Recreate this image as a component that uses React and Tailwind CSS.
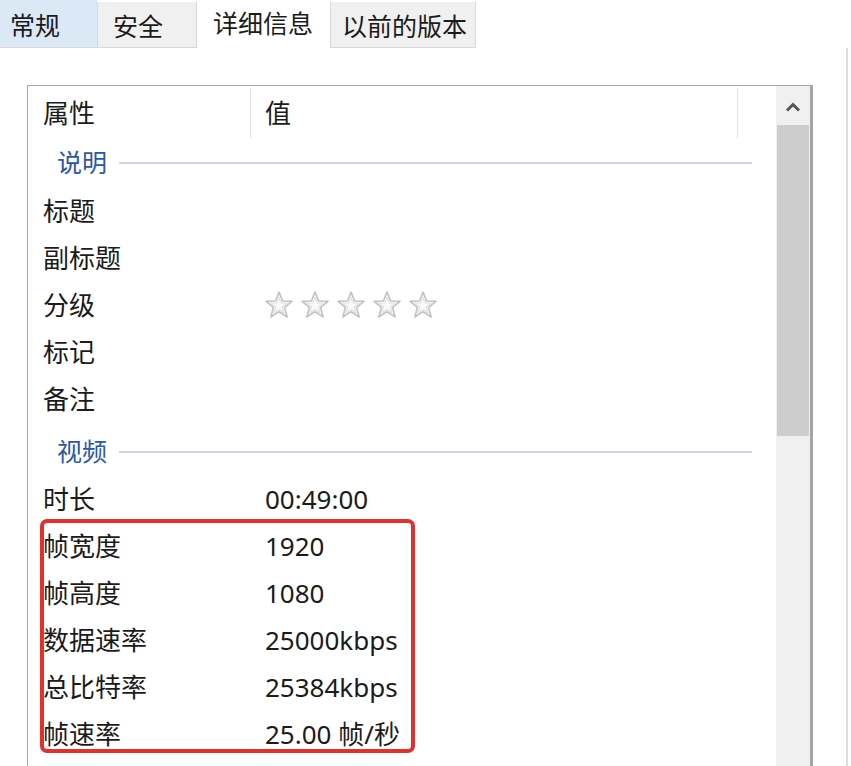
import React from "react";

const FONT = { fontFamily: '"Noto Sans", "Noto Sans CJK SC", sans-serif' };

// Hollow rating star, grey like the Windows property sheet
const Star = () => (
  <svg width="30" height="30" viewBox="0 0 30 30">
    <polygon
      points="15,2 18.6,11 28,11.4 20.6,17.4 23.2,27 15,21.6 6.8,27 9.4,17.4 2,11.4 11.4,11"
      fill="#fafafa"
      stroke="#c2c2c2"
      strokeWidth="1.6"
      strokeLinejoin="round"
    />
    <polygon
      points="15,7 17.2,13 23.2,13.3 18.4,17 20,23 15,19.6 10,23 11.6,17 6.8,13.3 12.8,13"
      fill="none"
      stroke="#e2e2e2"
      strokeWidth="1.2"
      strokeLinejoin="round"
    />
  </svg>
);

const GroupRow = ({ label, className }) => (
  <div className={`flex items-center pl-[29px] pr-[24px] ${className}`}>
    <span className="text-[#2a58a6] text-[25px] leading-none">{label}</span>
    <div className="flex-1 h-[2px] bg-[#cdd5e3] ml-[12px]" />
  </div>
);

const ItemRow = ({ name, children }) => (
  <div className="flex items-center h-[47px] text-[26px] leading-none text-[#1b1b1b]">
    <div className="w-[223px] pl-[15px]">{name}</div>
    <div className="pl-[14px] flex items-center">{children}</div>
  </div>
);

export default function App() {
  return (
    <div className="relative w-[851px] h-[766px] overflow-hidden bg-white" style={FONT}>
      {/* Tabs */}
      <div className="flex h-[48px] text-[25px] leading-none text-[#1b1b1b]">
        <div className="w-[97px] bg-[#dbe8f6] border-b border-[#d9d9d9] flex items-center pl-[10px] pt-[4px]">常规</div>
        <div className="w-[100px] bg-[#f0f0f0] border-l border-r border-b border-[#d9d9d9] mt-[2px] flex items-center pl-[15px] pt-[4px]">安全</div>
        <div className="w-[133px] bg-white flex items-center pl-[16px] pb-[4px] h-[50px]">详细信息</div>
        <div className="w-[146px] bg-[#f0f0f0] border-l border-r border-b border-[#d9d9d9] mt-[2px] flex items-center pl-[11px] pt-[4px]">以前的版本</div>
        <div className="flex-1" />
      </div>

      {/* Panel */}
      <div className="h-[718px] border-r-2 border-[#dcdcdc] w-[848px] pt-[37px] pl-[27px]">
        <div className="w-[786px] h-[700px] border-l border-t border-[#a8a8a8] border-r-[3px] border-r-[#a4a4a4] flex">
          {/* List content */}
          <div className="flex-1 pt-[2px]">
            <div className="flex h-[50px] text-[26px] leading-none text-[#1b1b1b]">
              <div className="w-[222px] pl-[15px] flex items-center">属性</div>
              <div className="w-px bg-[#e3e3e3]" />
              <div className="w-[486px] pl-[14px] flex items-center">值</div>
              <div className="w-px bg-[#e3e3e3]" />
            </div>

            <GroupRow label="说明" className="h-[49px]" />
            <ItemRow name="标题" />
            <ItemRow name="副标题" />
            <ItemRow name="分级">
              <div className="flex gap-[6px] -ml-[1px]">
                <Star />
                <Star />
                <Star />
                <Star />
                <Star />
              </div>
            </ItemRow>
            <ItemRow name="标记" />
            <ItemRow name="备注" />

            <GroupRow label="视频" className="h-[53px] pt-[6px]" />
            <ItemRow name="时长">00:49:00</ItemRow>
            <ItemRow name="帧宽度">1920</ItemRow>
            <ItemRow name="帧高度">1080</ItemRow>
            <ItemRow name="数据速率">25000kbps</ItemRow>
            <ItemRow name="总比特率">25384kbps</ItemRow>
            <ItemRow name="帧速率">25.00 帧/秒</ItemRow>
          </div>

          {/* Scrollbar */}
          <div className="w-[34px] flex flex-col bg-[#f0f0f0] pt-[2px]">
            <div className="h-[37px] flex items-center justify-center">
              <svg width="16" height="10" viewBox="0 0 16 10">
                <polyline points="2,8.5 8,2.5 14,8.5" fill="none" stroke="#555" strokeWidth="3" />
              </svg>
            </div>
            <div className="h-[311px] bg-[#cdcdcd] mx-[1px]" />
            <div className="flex-1" />
          </div>
        </div>
      </div>

      {/* Red highlight */}
      <div className="absolute left-[40px] top-[519px] w-[375px] h-[234px] border-[4px] border-[#e2312b] rounded-[7px]" />
    </div>
  );
}
